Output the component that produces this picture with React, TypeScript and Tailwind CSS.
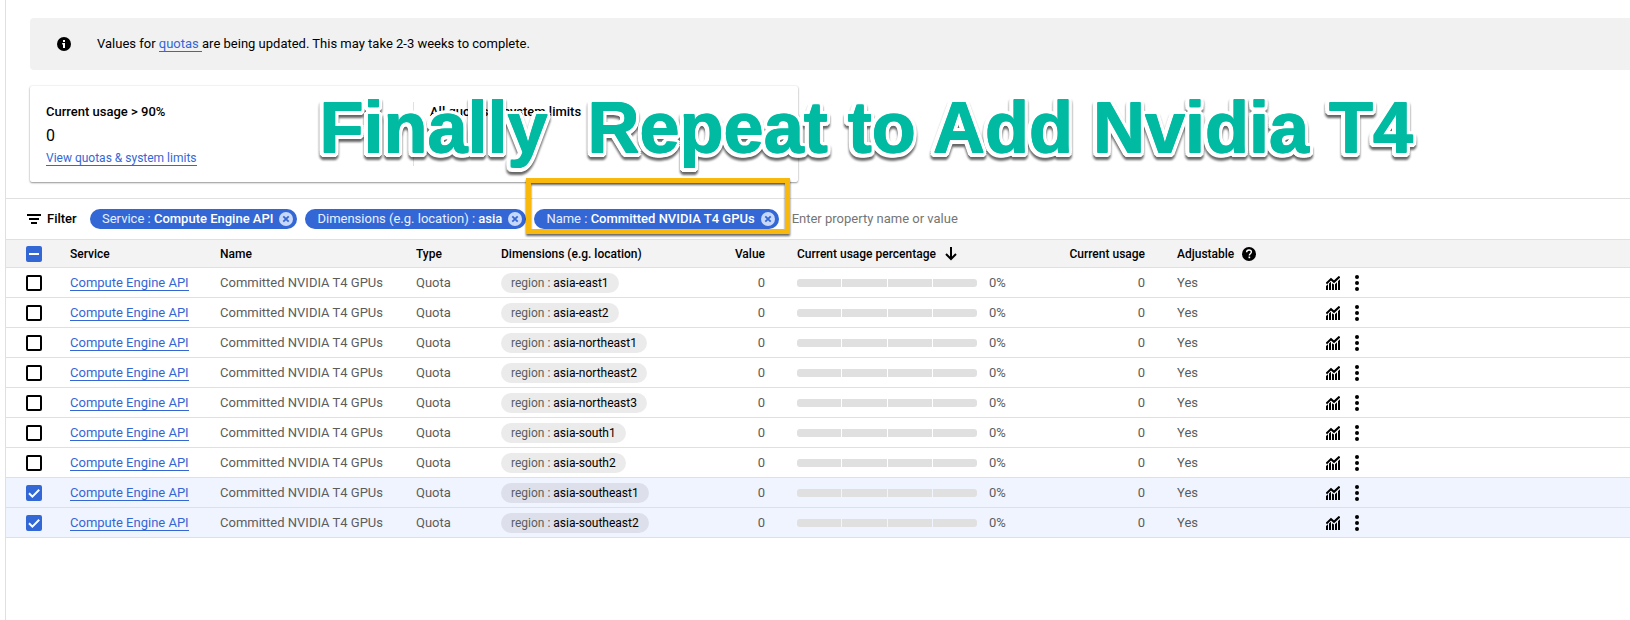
import React, { useState } from "react";

const regions = [
  "asia-east1",
  "asia-east2",
  "asia-northeast1",
  "asia-northeast2",
  "asia-northeast3",
  "asia-south1",
  "asia-south2",
  "asia-southeast1",
  "asia-southeast2",
];

const filters = [
  { name: "Service", value: "Compute Engine API" },
  { name: "Dimensions (e.g. location)", value: "asia" },
  { name: "Name", value: "Committed NVIDIA T4 GPUs" },
];

function InfoIcon() {
  return (
    <svg className="size-4 shrink-0" viewBox="0 0 24 24" aria-hidden="true">
      <circle cx="12" cy="12" r="10.500" />
      <path d="M10.500 6h3v3h-3zM9.300 10.500h4.200V18h-3v-5.300H9.300z" fill="#fff" />
    </svg>
  );
}

function FilterIcon() {
  return (
    <svg className="h-[10px] w-[14px] shrink-0" viewBox="0 0 14 10" aria-hidden="true">
      <path d="M0 0h14v2H0zM2 4h10v2H2zM4 8h6v2H4z" />
    </svg>
  );
}

function RemoveIcon() {
  return (
    <svg className="size-[14px]" viewBox="0 0 14 14" aria-hidden="true">
      <circle cx="7" cy="7" r="7" fill="#c8d8f8" />
      <path d="M4.300 4.300l5.400 5.400M9.700 4.300l-5.400 5.400" stroke="#3367d6" strokeWidth="1.800" />
    </svg>
  );
}

function ArrowDownIcon() {
  return (
    <svg className="h-[14px] w-3" viewBox="0 0 12 14" fill="none" stroke="#000" strokeWidth="2" aria-hidden="true">
      <path d="M6 0v12M1 7l5 5 5-5" />
    </svg>
  );
}

function HelpIcon() {
  return (
    <svg className="size-[14px]" viewBox="2 2 20 20" aria-hidden="true">
      <circle cx="12" cy="12" r="10" />
      <path d="M8.600 9.600c0-2 1.500-3.300 3.400-3.300s3.400 1.200 3.400 3c0 2.200-2.900 2.500-2.900 4.700" fill="none" stroke="#fff" strokeWidth="2" />
      <path d="M11.300 15.600h2.400v2.400h-2.400z" fill="#fff" />
    </svg>
  );
}

function ChartIcon() {
  return (
    <svg className="size-[14px]" viewBox="0 0 14 14" aria-hidden="true">
      <path d="M0 10l2-1.700V14H0zM3 7.500l2-1.700V14H3zM6 7.300l2 1.200V14H6zM9 8.300l2-2V14H9zM12 5.300l2-2V14h-2z" />
      <path d="M0.400 7.600L5 3.100l3 2.700L13.600 0.600" fill="none" stroke="#000" strokeWidth="2.100" />
    </svg>
  );
}

function MoreIcon() {
  return (
    <svg className="h-4 w-1" viewBox="0 0 4 16" aria-hidden="true">
      <circle cx="2" cy="2" r="2" />
      <circle cx="2" cy="8" r="2" />
      <circle cx="2" cy="14" r="2" />
    </svg>
  );
}

function Tick({ checked, mixed, label, onChange }: { checked: boolean; mixed?: boolean; label: string; onChange: () => void }) {
  return (
    <label className="grid size-4 place-items-center">
      <input
        type="checkbox"
        aria-label={label}
        checked={checked}
        onChange={onChange}
        className="col-start-1 row-start-1 size-4 appearance-none rounded-[2px] border-2 border-black bg-white checked:border-[#3367d6] checked:bg-[#3367d6]"
      />
      {checked && (
        <svg className="pointer-events-none col-start-1 row-start-1 size-4" viewBox="0 0 16 16" fill="none" stroke="#fff" strokeWidth="2" aria-hidden="true">
          <path d={mixed ? "M3 8h10" : "M3 8.200l3.400 3.400L13.200 4.800"} />
        </svg>
      )}
    </label>
  );
}

function UsageBar() {
  return (
    <div className="flex h-2 w-[180px] shrink-0 gap-px overflow-hidden rounded-[3px]">
      {[0, 1, 2, 3].map((n) => (
        <span key={n} className="flex-1 bg-[#e0e0e0]" />
      ))}
    </div>
  );
}

export default function App() {
  const [selected, setSelected] = useState<string[]>(["asia-southeast1", "asia-southeast2"]);
  const toggle = (r: string) =>
    setSelected((s) => (s.includes(r) ? s.filter((x) => x !== r) : [...s, r]));

  return (
    <div className="relative min-h-screen overflow-hidden bg-white pl-[5px] font-['Roboto',sans-serif] text-[13px] text-black">
      <main className="min-h-screen border-l border-[#e0e0e0] pt-[18px]">
        <div className="ml-6 flex h-[52px] items-center gap-[25px] rounded-l bg-[#f1f1f1] pl-[26px]">
          <InfoIcon />
          <p>
            Values for{" "}
            <a href="#quotas" className="border-b border-[#3367d6] text-[#3367d6]">
              quotas{" "}
            </a>
            are being updated. This may take 2-3 weeks to complete.
          </p>
        </div>

        <section className="mt-4 ml-6 grid h-24 max-w-[768px] grid-cols-2 rounded-[2px] py-4 shadow-[0_1px_2px_rgba(0,0,0,0.4),0_0_2px_rgba(0,0,0,0.12)]">
          <div className="flex flex-col items-start border-r border-[#e0e0e0] pl-4">
            <h2 className="leading-5 font-medium">Current usage &gt; 90%</h2>
            <p className="mt-[2px] text-base leading-6">0</p>
            <a href="#limits" className="mt-[3px] border-b border-[#3367d6] text-xs leading-[14px] text-[#3367d6]">
              View quotas &amp; system limits
            </a>
          </div>
          <div className="pl-4">
            <h2 className="leading-5 font-medium">All quotas &amp; system limits</h2>
          </div>
        </section>

        <div className="mt-4 flex h-[41px] items-center border-t border-[#e0e0e0] pl-[21px]">
          <FilterIcon />
          <label htmlFor="filter" className="ml-[6px] w-[43px] font-medium">
            Filter
          </label>
          <ul className="flex shrink-0 gap-2">
            {filters.map((f) => (
              <li key={f.name} className="flex h-5 items-center gap-[6px] rounded-full bg-[#3367d6] pr-1 pl-3 whitespace-nowrap text-[#e8f0fe]">
                <span>
                  {f.name} : <b className="font-medium text-white">{f.value}</b>
                </span>
                <button type="button" aria-label={`Remove ${f.name}`}>
                  <RemoveIcon />
                </button>
              </li>
            ))}
          </ul>
          <input
            id="filter"
            className="ml-[13px] min-w-0 flex-1 outline-none placeholder:text-[#757575]"
            placeholder="Enter property name or value"
          />
        </div>

        <table className="w-full table-fixed border-collapse text-left text-[#5c5c5c]">
          <colgroup>
            <col className="w-16" />
            <col className="w-[150px]" />
            <col className="w-[196px]" />
            <col className="w-[85px]" />
            <col className="w-[193px]" />
            <col className="w-[71px]" />
            <col className="w-[223px]" />
            <col className="w-[157px]" />
            <col className="w-[181px]" />
            <col />
          </colgroup>
          <thead>
            <tr className="h-7 border-y border-[#e0e0e0] bg-[#f3f3f3] text-xs text-black *:p-0 *:font-medium">
              <th className="pl-5!">
                <Tick checked={selected.length > 0} mixed label="Select all rows" onChange={() => setSelected([])} />
              </th>
              <th>Service</th>
              <th>Name</th>
              <th>Type</th>
              <th>Dimensions (e.g. location)</th>
              <th className="text-right">Value</th>
              <th className="pl-8!">
                <span className="flex items-center gap-[9px]">
                  Current usage percentage <ArrowDownIcon />
                </span>
              </th>
              <th className="text-right">Current usage</th>
              <th className="pl-8!">
                <span className="flex items-center gap-2">
                  Adjustable <HelpIcon />
                </span>
              </th>
              <th />
            </tr>
          </thead>
          <tbody>
            {regions.map((r) => {
              const on = selected.includes(r);
              return (
                <tr key={r} className={`h-[30px] border-b border-[#e0e0e0] *:p-0 ${on ? "bg-[#f0f4ff]" : ""}`}>
                  <td className="pl-5!">
                    <Tick checked={on} label={`Select ${r}`} onChange={() => toggle(r)} />
                  </td>
                  <td>
                    <a href="#service" className="border-b border-[#3367d6] text-[#3367d6]">
                      Compute Engine API
                    </a>
                  </td>
                  <td>Committed NVIDIA T4 GPUs</td>
                  <td>Quota</td>
                  <td>
                    <span className="inline-flex h-5 items-center rounded-full bg-black/8 px-[10px] align-middle text-xs whitespace-pre">
                      region : <span className="text-black">{r}</span>
                    </span>
                  </td>
                  <td className="text-right">0</td>
                  <td className="pl-8!">
                    <span className="flex items-center gap-3">
                      <UsageBar /> 0%
                    </span>
                  </td>
                  <td className="text-right">0</td>
                  <td className="pl-8!">Yes</td>
                  <td>
                    <span className="flex items-center gap-[15px]">
                      <button type="button" aria-label={`Show chart for ${r}`}>
                        <ChartIcon />
                      </button>
                      <button type="button" aria-label={`More actions for ${r}`}>
                        <MoreIcon />
                      </button>
                    </span>
                  </td>
                </tr>
              );
            })}
          </tbody>
        </table>
      </main>

      <div className="pointer-events-none absolute top-[178px] left-[526px] h-[56px] w-[264px] border-5 border-[#f9b90c] drop-shadow-[0_2px_1px_rgba(0,0,0,0.6)]" />
      <p className="pointer-events-none absolute top-[86px] left-[319px] font-['Liberation_Sans',Arial,sans-serif] text-[72px] leading-[84px] font-bold whitespace-pre text-[#00bba2] drop-shadow-[0_3px_1px_rgba(0,0,0,0.6)] [text-shadow:1px_0_#00bba2,0_-1px_#00bba2,1px_-1px_#00bba2,4px_0_#fff,4px_2px_#fff,3px_3px_#fff,2px_4px_#fff,0_4px_#fff,-2px_4px_#fff,-3px_3px_#fff,-4px_2px_#fff,-4px_0_#fff,-4px_-2px_#fff,-3px_-3px_#fff,-2px_-4px_#fff,0_-4px_#fff,2px_-4px_#fff,3px_-3px_#fff,4px_-2px_#fff]">
        Finally  Repeat to Add Nvidia T4
      </p>
    </div>
  );
}
